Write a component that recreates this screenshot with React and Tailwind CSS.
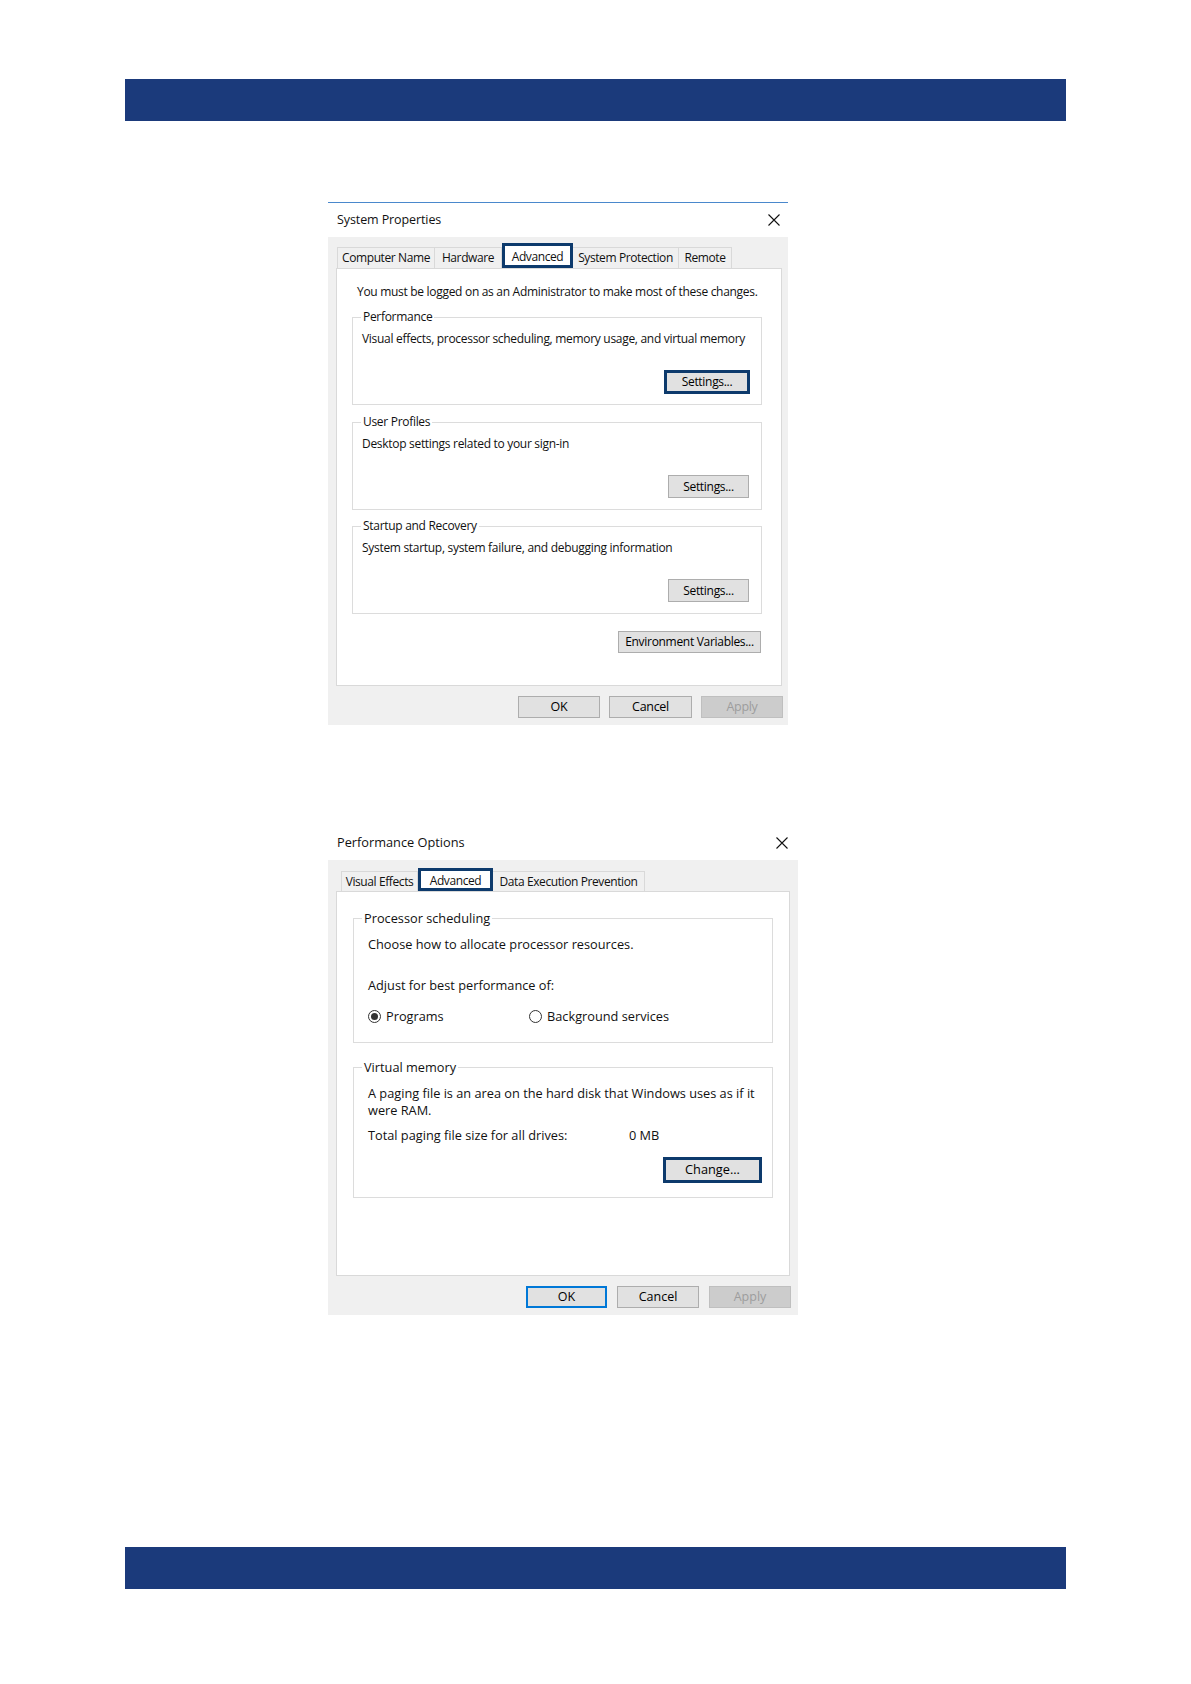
import React from "react";

function CloseX() {
  return (
    <svg width="12" height="12" viewBox="0 0 12 12" className="block">
      <path d="M0.5 0.5 L11.5 11.5 M11.5 0.5 L0.5 11.5" stroke="#111" strokeWidth="1.1" fill="none" />
    </svg>
  );
}

function Btn({ children, w, h = 22, focus, blue, disabled, className = "" }) {
  let cls =
    "flex items-center justify-center bg-[#e1e1e1] border border-[#adadad] text-black";
  if (focus) cls = "flex items-center justify-center bg-[#e1e1e1] border-[3px] border-[#0d3a6c] text-black";
  if (blue) cls = "flex items-center justify-center bg-[#e1e1e1] border-2 border-[#0078d7] text-black";
  if (disabled) cls = "flex items-center justify-center bg-[#cccccc] border border-[#bfbfbf] text-[#9d9d9d]";
  return (
    <div className={`${cls} ${w} ${className}`} style={{ height: h }}>
      {children}
    </div>
  );
}

function Radio({ checked }) {
  return (
    <span className="w-[13px] h-[13px] rounded-full border border-[#333] flex items-center justify-center bg-white shrink-0">
      {checked && <span className="w-[7px] h-[7px] rounded-full bg-[#333]" />}
    </span>
  );
}

function Group1({ legend, text, btn, focus, className = "" }) {
  return (
    <fieldset className={`border border-[#dcdcdc] pl-[8px] pr-[12px] ${focus ? "pb-[10px]" : "pb-[11px]"} ${className}`}>
      <legend className="px-[2px] leading-[16px]">{legend}</legend>
      <p className="mt-[6px] pl-[1px] leading-[16px]">{text}</p>
      <div className="flex justify-end mt-[23px]">
        {focus ? (
          <Btn w="w-[86px]" h={24} focus className="-mr-[1px]">{btn}</Btn>
        ) : (
          <Btn w="w-[81px]" h={23}>{btn}</Btn>
        )}
      </div>
    </fieldset>
  );
}

function SystemProperties() {
  const tab = "h-[21px] flex items-center justify-center border-t border-r border-[#d9d9d9] bg-[#f0f0f0]";
  return (
    <div className="ml-[328px] mt-[81px] w-[460px] border-t border-[#4a88cc] bg-white font-['Open_Sans','Noto_Sans',sans-serif] text-[12px] tracking-[-0.3px] text-[#111]">
      <div className="h-[34px] flex items-center justify-between pl-[9px] pr-[8px]">
        <span className="text-[12.5px] tracking-[-0.1px]">System Properties</span>
        <CloseX />
      </div>
      <div className="bg-[#f0f0f0] h-[488px] pt-[6px] pl-[8px] pr-[6px]">
        <div className="flex items-end h-[25px] pl-[1px] tracking-[-0.4px]">
          <div className={`${tab} w-[98px] border-l`}>Computer Name</div>
          <div className={`${tab} w-[67px]`}>Hardware</div>
          <div className="h-[25px] w-[71px] flex items-start justify-center pt-[2px] border-[3px] border-[#0d3a6c] bg-white">Advanced</div>
          <div className={`${tab} w-[106px]`}>System Protection</div>
          <div className={`${tab} w-[53px]`}>Remote</div>
        </div>
        <div className="h-[418px] border border-[#d9d9d9] bg-white pt-[15px] px-[15px] flex flex-col">
          <p className="pl-[5px] leading-[16px]">You must be logged on as an Administrator to make most of these changes.</p>
          <Group1
            className="mt-[9px] mr-[4px]"
            legend="Performance"
            text="Visual effects, processor scheduling, memory usage, and virtual memory"
            btn="Settings..."
            focus
          />
          <Group1
            className="mt-[9px] mr-[4px]"
            legend="User Profiles"
            text="Desktop settings related to your sign-in"
            btn="Settings..."
          />
          <Group1
            className="mt-[8px] mr-[4px]"
            legend="Startup and Recovery"
            text="System startup, system failure, and debugging information"
            btn="Settings..."
          />
          <div className="flex justify-end mt-[17px] mr-[5px]">
            <Btn w="w-[143px]">Environment Variables...</Btn>
          </div>
        </div>
        <div className="flex justify-end gap-[9px] mt-[10px] -mr-[1px] text-[12.5px]">
          <Btn w="w-[82px]">OK</Btn>
          <Btn w="w-[83px]">Cancel</Btn>
          <Btn w="w-[82px]" disabled>Apply</Btn>
        </div>
      </div>
    </div>
  );
}

function PerformanceOptions() {
  const tab = "h-[20px] flex items-center justify-center border-t border-r border-[#d9d9d9] bg-[#f0f0f0]";
  return (
    <div className="ml-[328px] mt-[101px] w-[470px] bg-white font-['Open_Sans','Noto_Sans',sans-serif] text-[12.75px] text-[#111]">
      <div className="h-[34px] flex items-center justify-between pl-[9px] pr-[10px]">
        <span className="text-[12.75px]">Performance Options</span>
        <CloseX />
      </div>
      <div className="bg-[#f0f0f0] h-[455px] pt-[8px] px-[8px]">
        <div className="flex items-end h-[23px] pl-[5px] text-[12px] tracking-[-0.4px]">
          <div className={`${tab} w-[77px] border-l`}>Visual Effects</div>
          <div className="h-[23px] w-[75px] flex items-start justify-center pt-[1px] border-[3px] border-[#0d3a6c] bg-white">Advanced</div>
          <div className={`${tab} w-[152px]`}>Data Execution Prevention</div>
        </div>
        <div className="h-[385px] border border-[#d9d9d9] bg-white pt-[17px] px-[16px] flex flex-col">
          <fieldset className="border border-[#dcdcdc] pl-[8px] pr-[10px] pb-[17px]">
            <legend className="px-[2px] leading-[18px]">Processor scheduling</legend>
            <div className="pl-[6px]">
              <p className="mt-[9px] leading-[17px]">Choose how to allocate processor resources.</p>
              <p className="mt-[24px] leading-[17px]">Adjust for best performance of:</p>
              <div className="mt-[14px] flex items-center leading-[17px]">
                <div className="w-[161px] flex items-center gap-[5px]">
                  <Radio checked />
                  <span>Programs</span>
                </div>
                <div className="flex items-center gap-[5px]">
                  <Radio />
                  <span>Background services</span>
                </div>
              </div>
            </div>
          </fieldset>
          <fieldset className="mt-[15px] border border-[#dcdcdc] pl-[8px] pr-[10px] pb-[14px]">
            <legend className="px-[2px] leading-[18px]">Virtual memory</legend>
            <div className="pl-[6px]">
              <p className="mt-[9px] leading-[17px]">
                A paging file is an area on the hard disk that Windows uses as if it
                <br />
                were RAM.
              </p>
              <div className="mt-[8px] flex leading-[17px]">
                <span className="w-[261px]">Total paging file size for all drives:</span>
                <span>0 MB</span>
              </div>
            </div>
            <div className="flex justify-end mt-[13px]">
              <Btn w="w-[99px]" h={26} focus>Change...</Btn>
            </div>
          </fieldset>
        </div>
        <div className="flex justify-end gap-[10px] mt-[10px] -mr-[1px] text-[12.5px]">
          <Btn w="w-[81px]" blue>OK</Btn>
          <Btn w="w-[82px]">Cancel</Btn>
          <Btn w="w-[82px]" disabled>Apply</Btn>
        </div>
      </div>
    </div>
  );
}

export default function App() {
  return (
    <div className="w-[1191px] h-[1684px] bg-white flex flex-col overflow-hidden">
      <div className="mt-[79px] ml-[125px] w-[941px] h-[42px] bg-[#1b3a7b] shrink-0" />
      <SystemProperties />
      <PerformanceOptions />
      <div className="mt-[232px] ml-[125px] w-[941px] h-[42px] bg-[#1b3a7b] shrink-0" />
    </div>
  );
}
